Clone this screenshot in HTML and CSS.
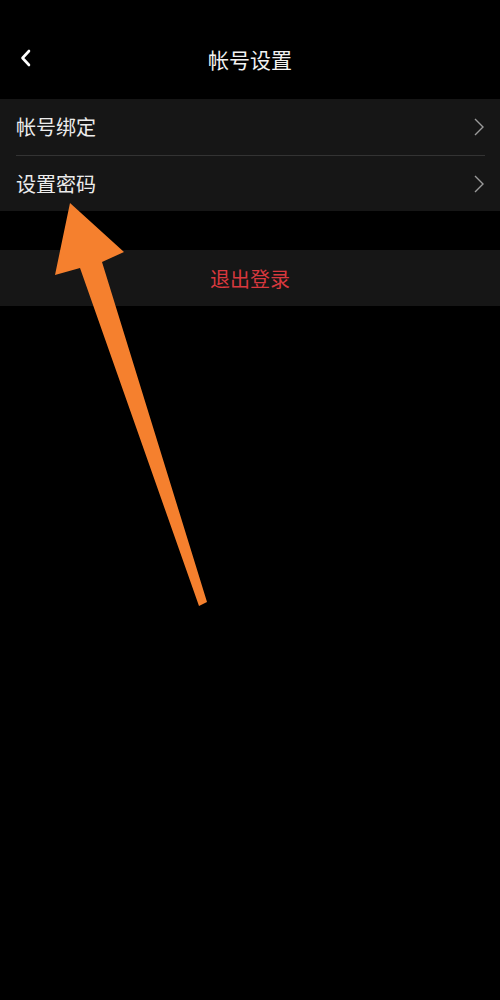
FILE: index.html
```html
<!DOCTYPE html>
<html lang="zh-CN">
<head>
<meta charset="utf-8">
<title>帐号设置</title>
<link rel="stylesheet" href="styles.css">
</head>
<body>
<div class="page">
  <header class="nav">
    <span class="back">
      <svg width="14" height="20" viewBox="0 0 14 20"><path d="M10 3 L3.5 10 L10 17" fill="none" stroke="#fff" stroke-width="2.6" stroke-linecap="round" stroke-linejoin="round"/></svg>
    </span>
    <h1 class="title">帐号设置</h1>
  </header>

  <section class="group">
    <div class="row">
      <div class="row-inner divided">
        <span class="label">帐号绑定</span>
        <svg class="chev" width="12" height="20" viewBox="0 0 12 20"><path d="M2 2 L10 10 L2 18" fill="none" stroke="#9a9a9a" stroke-width="1.4"/></svg>
      </div>
    </div>
    <div class="row">
      <div class="row-inner">
        <span class="label">设置密码</span>
        <svg class="chev" width="12" height="20" viewBox="0 0 12 20"><path d="M2 2 L10 10 L2 18" fill="none" stroke="#9a9a9a" stroke-width="1.4"/></svg>
      </div>
    </div>
  </section>

  <section class="logout">退出登录</section>

  <svg class="arrow" width="500" height="1000" viewBox="0 0 500 1000">
    <polygon points="70,203 124,252 102,262 207,602 199,606 80,268 55,275" fill="#f5802e"/>
  </svg>
</div>
</body>
</html>
```

FILE: styles.css
```css
html, body {
  margin: 0;
  padding: 0;
  background: #000;
}
body {
  font-family: "Noto Sans CJK SC", "Noto Sans", sans-serif;
  color: #ededed;
}
.page {
  position: relative;
  width: 500px;
  height: 1000px;
  overflow: hidden;
  background: #000;
}
.nav {
  position: relative;
  height: 40px;
  margin-top: 39px;
  display: flex;
  align-items: center;
  justify-content: center;
}
.back {
  position: absolute;
  left: 19px;
  top: 9px;
  display: flex;
}
.title {
  margin: 0;
  font-size: 21px;
  font-weight: 400;
  line-height: 40px;
  color: #f2f2f2;
}
.group {
  margin-top: 20px;
  background: #161616;
}
.row {
  padding-left: 16px;
  padding-right: 15px;
}
.row-inner {
  height: 56px;
  display: flex;
  align-items: center;
  justify-content: space-between;
}
.row-inner.divided {
  height: 56px;
  border-bottom: 1px solid #333;
}
.row:last-child .row-inner {
  height: 55px;
}
.label {
  font-size: 20px;
  line-height: 1;
  color: #ececec;
}
.chev {
  display: block;
}
.logout {
  margin-top: 39px;
  height: 56px;
  background: #161616;
  display: flex;
  align-items: center;
  justify-content: center;
  font-size: 20px;
  color: #d8383e;
}
.arrow {
  position: absolute;
  left: 0;
  top: 0;
  pointer-events: none;
}
```
